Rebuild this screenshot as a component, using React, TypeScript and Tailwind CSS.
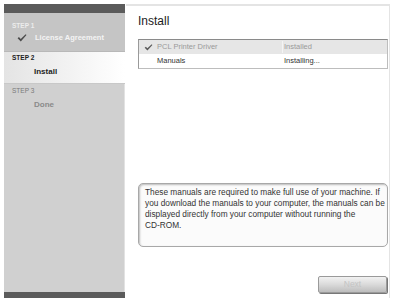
import React from "react";

const Check = ({ className }: { className?: string }) => (
  <svg viewBox="0 0 12 10" className={className} fill="currentColor">
    <path d="M0.5 5.2 L2.2 3.8 L4.4 6.2 L10.6 0.4 L11.6 1.4 L4.5 9.4 Z" />
  </svg>
);

export default function App() {
  return (
    <div
      className="w-[395px] h-[298px] bg-white flex pt-[4px] pl-[4px] overflow-hidden"
      style={{ fontFamily: '"Liberation Sans", Arial, sans-serif' }}
    >
      {/* Steps sidebar */}
      <div className="w-[121px] flex flex-col shrink-0">
        <div className="h-[9px] bg-[#5b5b5b]" />
        <div className="h-[39px] bg-[#c5c5c5] border-b border-[#b8b8b8] pt-[9px] pl-[8px]">
          <div className="text-[6.5px] font-bold leading-[8px] text-[#ececec]">STEP 1</div>
          <div className="flex items-center mt-[3px] pl-[5px]">
            <Check className="w-[10px] h-[8px] text-[#4a4a4a]" />
            <span className="ml-[8px] text-[7.5px] font-bold text-[#f4f4f4] leading-[10px]">
              License Agreement
            </span>
          </div>
        </div>
        <div className="h-[32px] bg-gradient-to-r from-[#e4e4e4] to-white border-b border-[#c8c8c8] pt-[2px] pl-[8px]">
          <div className="text-[6.5px] font-bold leading-[8px] text-[#222]">STEP 2</div>
          <div className="mt-[5px] pl-[22px] text-[8px] font-bold leading-[10px] text-[#1e1e1e]">
            Install
          </div>
        </div>
        <div className="flex-1 bg-[#d0d0d0] pt-[3px] pl-[8px] border-r border-[#e2e2e2]">
          <div className="text-[6.5px] leading-[8px] text-[#7a7a7a]">STEP 3</div>
          <div className="mt-[5px] pl-[22px] text-[8px] font-bold leading-[10px] text-[#8a8a8a]">
            Done
          </div>
        </div>
        <div className="h-[6px] bg-[#5b5b5b]" />
      </div>

      {/* Main panel */}
      <div className="w-[264px] ml-[1px] border-t-2 border-r border-[#e4e4e4] flex flex-col pl-[12px] pr-[1px]">
        <div className="mt-[8px] text-[12px] leading-[14px] text-[#1c1c1c]">Install</div>

        <div className="mt-[11px] border border-[#bdbdbd] border-t-[#8a8a8a] border-l-[#9a9a9a] text-[7.5px]">
          <div className="flex h-[14px] items-center bg-[#e6e6e6]">
            <div className="w-[18px] flex justify-center">
              <Check className="w-[9px] h-[7px] text-[#5a5a5a]" />
            </div>
            <div className="w-[125px] text-[#9a9a9a]">PCL Printer Driver</div>
            <div className="flex-1 text-[#9a9a9a] border-l border-[#f4f4f4] pl-[1px]">Installed</div>
          </div>
          <div className="flex h-[14px] items-center bg-white">
            <div className="w-[18px]" />
            <div className="w-[125px] text-[#333]">Manuals</div>
            <div className="flex-1 text-[#333] pl-[2px]">Installing...</div>
          </div>
        </div>

        <div className="mt-[114px] h-[64px] rounded-[5px] border border-[#a8a8a8] bg-[#fbfbfb] shadow-[inset_1px_1px_2px_rgba(0,0,0,0.25)] px-[6px] pt-[3px] text-[8.3px] leading-[11px] text-[#333] whitespace-nowrap">
          These manuals are required to make full use of your machine. If
          <br />
          you download the manuals to your computer, the manuals can be
          <br />
          displayed directly from your computer without running the
          <br />
          CD-ROM.
        </div>

        <div className="mt-[29px] flex justify-end pr-[1px]">
          <button className="w-[69px] h-[17px] rounded-[2px] border border-[#9a9a9a] bg-gradient-to-b from-[#f2f2f2] via-[#dadada] to-[#bdbdbd] text-[8.5px] text-[#c4c4c4] shadow-[1px_1px_0_#777]">
            Next
          </button>
        </div>
      </div>
    </div>
  );
}
